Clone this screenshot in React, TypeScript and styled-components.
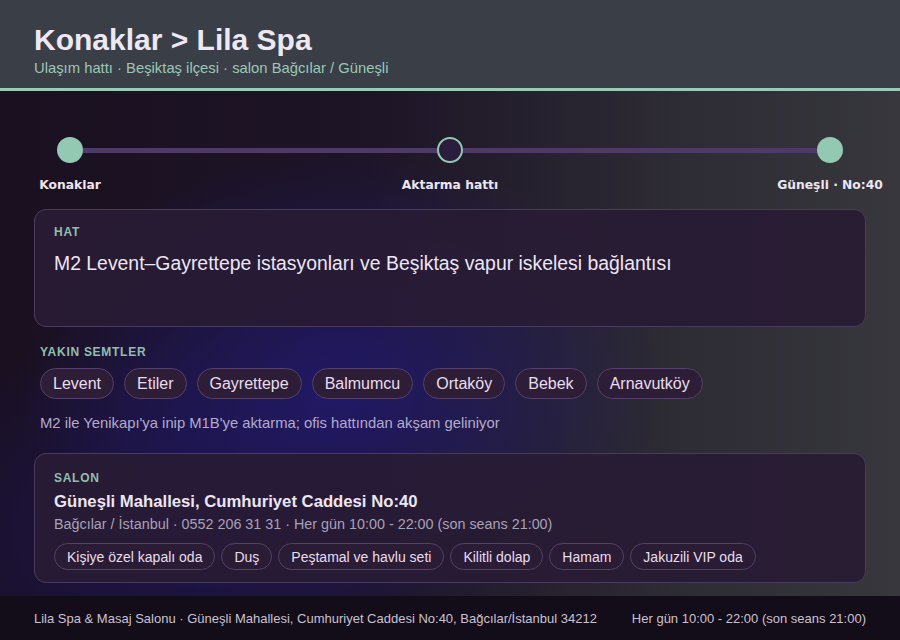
import React from "react";
import styled, { createGlobalStyle } from "styled-components";

const Global = createGlobalStyle`
  * { box-sizing: border-box; }
  html, body { margin: 0; padding: 0; }
  body {
    font-family: "Liberation Sans", Arial, sans-serif;
    background: #1b1322;
  }
`;

const Page = styled.div`
  width: 900px;
  height: 640px;
  display: flex;
  flex-direction: column;
  overflow: hidden;
  background:
    radial-gradient(ellipse 320px 240px at 340px 390px, rgba(34, 26, 120, 0.78), rgba(34, 26, 120, 0) 100%),
    radial-gradient(ellipse 280px 200px at 160px 530px, rgba(28, 22, 100, 0.6), rgba(28, 22, 100, 0) 100%),
    linear-gradient(90deg, #1a1020 0%, #1d1426 40%, #2d2b34 75%, #37373d 100%);
`;

const Header = styled.header`
  background: #3a3e46;
  border-bottom: 3px solid #9ccab9;
  padding: 22px 34px 0;
  height: 91px;
`;

const Title = styled.h1`
  margin: 0;
  font-size: 30px;
  line-height: 36px;
  font-weight: 700;
  color: #ede8f2;
`;

const Subtitle = styled.div`
  font-size: 14.8px;
  line-height: 21px;
  color: #9cc7b8;
`;

const Main = styled.main`
  flex: 1;
  padding: 46px 34px 0;
  display: flex;
  flex-direction: column;
`;

const Track = styled.div`
  display: flex;
  align-items: flex-start;
  padding: 0 23px;
`;

const Stop = styled.div`
  width: 26px;
  display: flex;
  flex-direction: column;
  align-items: center;
`;

const Dot = styled.div<{ $hollow?: boolean }>`
  width: 26px;
  height: 26px;
  border-radius: 50%;
  background: ${(p) => (p.$hollow ? "#2b1d3c" : "#93c9b2")};
  border: ${(p) => (p.$hollow ? "2px solid #93c9b2" : "none")};
`;

const Connector = styled.div`
  flex: 1;
  height: 5px;
  margin-top: 11px;
  background: #4e3a66;
`;

const StopLabel = styled.div`
  margin-top: 15px;
  white-space: nowrap;
  font-family: "DejaVu Sans", sans-serif;
  font-weight: 700;
  font-size: 12.3px;
  line-height: 15px;
  color: #ece6f0;
`;

const Card = styled.section<{ $minHeight?: number }>`
  background: rgba(40, 27, 52, 0.92);
  border: 1px solid #4a3a5e;
  border-radius: 12px;
  padding: 15px 19px 12px;
  min-height: ${(p) => (p.$minHeight ? `${p.$minHeight}px` : "auto")};
`;

const HatCard = styled(Card)`
  margin-top: 16px;
`;

const SalonCard = styled(Card)`
  margin-top: 21px;
  padding-top: 17px;
`;

const Label = styled.div`
  font-size: 12px;
  line-height: 15px;
  font-weight: 700;
  letter-spacing: 0.06em;
  color: #8fbfae;
  text-transform: uppercase;
`;

const HatText = styled.div`
  margin-top: 11px;
  font-size: 19.4px;
  line-height: 24px;
  color: #ece6f4;
`;

const Section = styled.section`
  margin-top: 18px;
  padding-left: 6px;
`;

const ChipRow = styled.div<{ $gap: number }>`
  display: flex;
  flex-wrap: wrap;
  gap: ${(p) => p.$gap}px;
`;

const Chips = styled(ChipRow)`
  margin-top: 8px;
`;

const Chip = styled.span<{ $size: "lg" | "sm" }>`
  display: inline-flex;
  align-items: center;
  height: ${(p) => (p.$size === "lg" ? 31 : 27)}px;
  padding: 0 12px;
  border-radius: 16px;
  border: 1px solid #54406a;
  background: ${(p) => (p.$size === "lg" ? "#2e1d37" : "#2b1c36")};
  color: #e8deee;
  font-size: ${(p) => (p.$size === "lg" ? 16 : 14)}px;
  white-space: nowrap;
`;

const Note = styled.div`
  margin-top: 15px;
  font-size: 14.8px;
  line-height: 18px;
  color: #b3aacb;
`;

const SalonTitle = styled.div`
  margin-top: 6px;
  font-size: 16.7px;
  line-height: 20px;
  font-weight: 700;
  color: #ece6f2;
`;

const SalonSub = styled.div`
  margin-top: 3px;
  font-size: 14.35px;
  line-height: 18px;
  color: #a9a1b6;
`;

const SalonChips = styled(ChipRow)`
  margin-top: 10px;
`;

const Footer = styled.footer`
  height: 44px;
  background: #130d19;
  padding: 0 34px;
  display: flex;
  align-items: center;
  justify-content: space-between;
  font-size: 13px;
  color: #c9c2d2;
`;

const neighborhoods = ["Levent", "Etiler", "Gayrettepe", "Balmumcu", "Ortaköy", "Bebek", "Arnavutköy"];
const amenities = ["Kişiye özel kapalı oda", "Duş", "Peştamal ve havlu seti", "Kilitli dolap", "Hamam", "Jakuzili VIP oda"];

export default function App() {
  return (
    <Page>
      <Global />
      <Header>
        <Title>Konaklar &gt; Lila Spa</Title>
        <Subtitle>Ulaşım hattı · Beşiktaş ilçesi · salon Bağcılar / Güneşli</Subtitle>
      </Header>
      <Main>
        <Track>
          <Stop>
            <Dot />
            <StopLabel>Konaklar</StopLabel>
          </Stop>
          <Connector />
          <Stop>
            <Dot $hollow />
            <StopLabel>Aktarma hattı</StopLabel>
          </Stop>
          <Connector />
          <Stop>
            <Dot />
            <StopLabel>Güneşli · No:40</StopLabel>
          </Stop>
        </Track>

        <HatCard $minHeight={118}>
          <Label>Hat</Label>
          <HatText>M2 Levent–Gayrettepe istasyonları ve Beşiktaş vapur iskelesi bağlantısı</HatText>
        </HatCard>

        <Section>
          <Label>Yakın semtler</Label>
          <Chips $gap={10}>
            {neighborhoods.map((n) => (
              <Chip key={n} $size="lg">{n}</Chip>
            ))}
          </Chips>
          <Note>M2 ile Yenikapı'ya inip M1B'ye aktarma; ofis hattından akşam geliniyor</Note>
        </Section>

        <SalonCard>
          <Label>Salon</Label>
          <SalonTitle>Güneşli Mahallesi, Cumhuriyet Caddesi No:40</SalonTitle>
          <SalonSub>Bağcılar / İstanbul · 0552 206 31 31 · Her gün 10:00 - 22:00 (son seans 21:00)</SalonSub>
          <SalonChips $gap={6}>
            {amenities.map((a) => (
              <Chip key={a} $size="sm">{a}</Chip>
            ))}
          </SalonChips>
        </SalonCard>
      </Main>
      <Footer>
        <span>Lila Spa &amp; Masaj Salonu · Güneşli Mahallesi, Cumhuriyet Caddesi No:40, Bağcılar/İstanbul 34212</span>
        <span>Her gün 10:00 - 22:00 (son seans 21:00)</span>
      </Footer>
    </Page>
  );
}
